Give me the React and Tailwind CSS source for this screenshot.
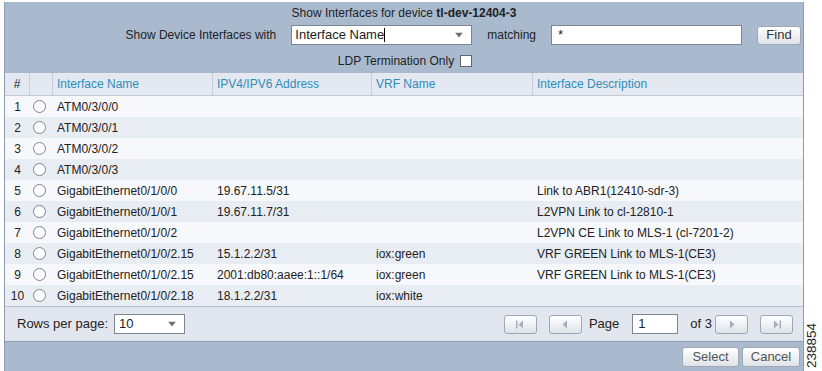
import React from 'react'

const rows = [
  { n: 1, name: 'ATM0/3/0/0', ip: '', vrf: '', desc: '' },
  { n: 2, name: 'ATM0/3/0/1', ip: '', vrf: '', desc: '' },
  { n: 3, name: 'ATM0/3/0/2', ip: '', vrf: '', desc: '' },
  { n: 4, name: 'ATM0/3/0/3', ip: '', vrf: '', desc: '' },
  { n: 5, name: 'GigabitEthernet0/1/0/0', ip: '19.67.11.5/31', vrf: '', desc: 'Link to ABR1(12410-sdr-3)' },
  { n: 6, name: 'GigabitEthernet0/1/0/1', ip: '19.67.11.7/31', vrf: '', desc: 'L2VPN Link to cl-12810-1' },
  { n: 7, name: 'GigabitEthernet0/1/0/2', ip: '', vrf: '', desc: 'L2VPN CE Link to MLS-1 (cl-7201-2)' },
  { n: 8, name: 'GigabitEthernet0/1/0/2.15', ip: '15.1.2.2/31', vrf: 'iox:green', desc: 'VRF GREEN Link to MLS-1(CE3)' },
  { n: 9, name: 'GigabitEthernet0/1/0/2.15', ip: '2001:db80:aaee:1::1/64', vrf: 'iox:green', desc: 'VRF GREEN Link to MLS-1(CE3)' },
  { n: 10, name: 'GigabitEthernet0/1/0/2.18', ip: '18.1.2.2/31', vrf: 'iox:white', desc: '' },
]

const cols = 'grid grid-cols-[25px_23px_160px_159px_161px_1fr]'

function Caret() {
  return (
    <svg width="8" height="5" viewBox="0 0 8 5" className="absolute right-[8px] top-1/2 -translate-y-1/2">
      <path d="M0 0h8L4 5z" fill="#6b6f76" />
    </svg>
  )
}

function Btn({ children, className = '' }) {
  return (
    <div className={`flex items-center justify-center rounded-[3px] border border-[#9ea7b3] bg-gradient-to-b from-white to-[#dfe3e8] text-[#333] ${className}`}>
      {children}
    </div>
  )
}

function PagerIcon({ kind }) {
  const c = '#a3adbb'
  return (
    <svg width="10" height="9" viewBox="0 0 10 9">
      {kind === 'first' && (<><rect x="1" y="0.5" width="1.5" height="8" fill={c} /><path d="M8 0.5v8L3.5 4.5z" fill={c} /></>)}
      {kind === 'prev' && <path d="M7 0.5v8L2.5 4.5z" fill={c} />}
      {kind === 'next' && <path d="M3 0.5v8L7.5 4.5z" fill={c} />}
      {kind === 'last' && (<><path d="M2 0.5v8L6.5 4.5z" fill={c} /><rect x="7.5" y="0.5" width="1.5" height="8" fill={c} /></>)}
    </svg>
  )
}

export default function App() {
  return (
    <div className="flex bg-white w-[822px] h-[371px] font-['Liberation_Sans',Arial,sans-serif] text-[12px] text-[#222]">
      <div className="ml-[4px] mt-[2px] w-[800px] h-[369px] flex flex-col border-x border-[#8d9cb1]">
        {/* top filter band */}
        <div className="bg-[#a9bacf] h-[71px] flex flex-col pt-[3px]">
          <div className="leading-[16px] text-center">Show Interfaces for device <span className="font-bold">tl-dev-12404-3</span></div>
          <div className="flex items-center justify-end pr-[2px] mt-[4px]">
            <span className="mr-[15px]">Show Device Interfaces with</span>
            <div className="relative w-[181px] h-[20px] bg-white border border-[#7d8590] flex items-center pl-[3px] text-[13px]">
              Interface Name<span className="w-px h-[14px] bg-black" />
              <Caret />
            </div>
            <span className="ml-[15px] mr-[15px]">matching</span>
            <div className="w-[191px] h-[20px] bg-white border border-[#7d8590] flex items-center pl-[6px] text-[13px]">*</div>
            <Btn className="ml-[15px] w-[44px] h-[19px] text-[13px]">Find</Btn>
          </div>
          <div className="flex items-center justify-center mt-[7px] pl-[2px]">
            <span className="mr-[6px]">LDP Termination Only</span>
            <div className="w-[12px] h-[12px] bg-white border border-[#5f6670]" />
          </div>
        </div>

        {/* header */}
        <div className={`${cols} h-[23px] bg-[#e4e8f0] border-b border-[#c2cad6] text-[#2e8dbb]`}>
          <div className="flex items-center justify-center text-[#222] border-r border-[#c6cdd8]">#</div>
          <div className="border-r border-[#c6cdd8]" />
          <div className="flex items-center pl-[4px] border-r border-[#c6cdd8]">Interface Name</div>
          <div className="flex items-center pl-[4px] border-r border-[#c6cdd8]">IPV4/IPV6 Address</div>
          <div className="flex items-center pl-[4px] border-r border-[#c6cdd8]">VRF Name</div>
          <div className="flex items-center pl-[4px]">Interface Description</div>
        </div>

        {/* rows */}
        <div className="flex flex-col">
          {rows.map((r, i) => (
            <div key={r.n} className={`${cols} h-[21px] items-center ${i % 2 ? 'bg-[#e8ecf3]' : 'bg-[#f7f8fb]'}`}>
              <div className="text-center">{r.n}</div>
              <div className="flex items-center pl-[3px]">
                <div className="w-[13px] h-[13px] rounded-full border border-[#7c8490] bg-white" />
              </div>
              <div className="pl-[4px]">{r.name}</div>
              <div className="pl-[4px]">{r.ip}</div>
              <div className="pl-[4px]">{r.vrf}</div>
              <div className="pl-[4px]">{r.desc}</div>
            </div>
          ))}
        </div>

        {/* footer */}
        <div className="h-[35px] bg-[#e2e7ef] border-t border-[#b5bfcd] flex items-center pl-[12px] pr-[10px]">
          <span className="text-[13px]">Rows per page:</span>
          <div className="relative ml-[6px] w-[71px] h-[20px] bg-white border border-[#7d8590] flex items-center pl-[4px] text-[13px]">
            10
            <Caret />
          </div>
          <div className="ml-auto flex items-center text-[13px]">
            <Btn className="w-[33px] h-[19px]"><PagerIcon kind="first" /></Btn>
            <Btn className="ml-[12px] w-[33px] h-[19px]"><PagerIcon kind="prev" /></Btn>
            <span className="ml-[7px]">Page</span>
            <div className="ml-[13px] w-[46px] h-[20px] bg-white border border-[#7d8590] flex items-center pl-[5px]">1</div>
            <span className="ml-[12px]">of 3</span>
            <Btn className="ml-[3px] w-[33px] h-[19px]"><PagerIcon kind="next" /></Btn>
            <Btn className="ml-[12px] w-[33px] h-[19px]"><PagerIcon kind="last" /></Btn>
          </div>
        </div>

        {/* bottom band */}
        <div className="flex-1 bg-[#a9bacf] border-t border-[#8d9cb1] flex items-center justify-end pr-[3px] gap-[3px] text-[13px]">
          <Btn className="w-[57px] h-[20px] text-[#555]">Select</Btn>
          <Btn className="w-[58px] h-[20px] text-[#555]">Cancel</Btn>
        </div>
      </div>

      <div className="flex flex-col justify-end pb-[3px] ml-[1px]">
        <div className="[writing-mode:vertical-rl] rotate-180 text-[13.5px] leading-[14px] text-[#222]">238854</div>
      </div>
    </div>
  )
}
